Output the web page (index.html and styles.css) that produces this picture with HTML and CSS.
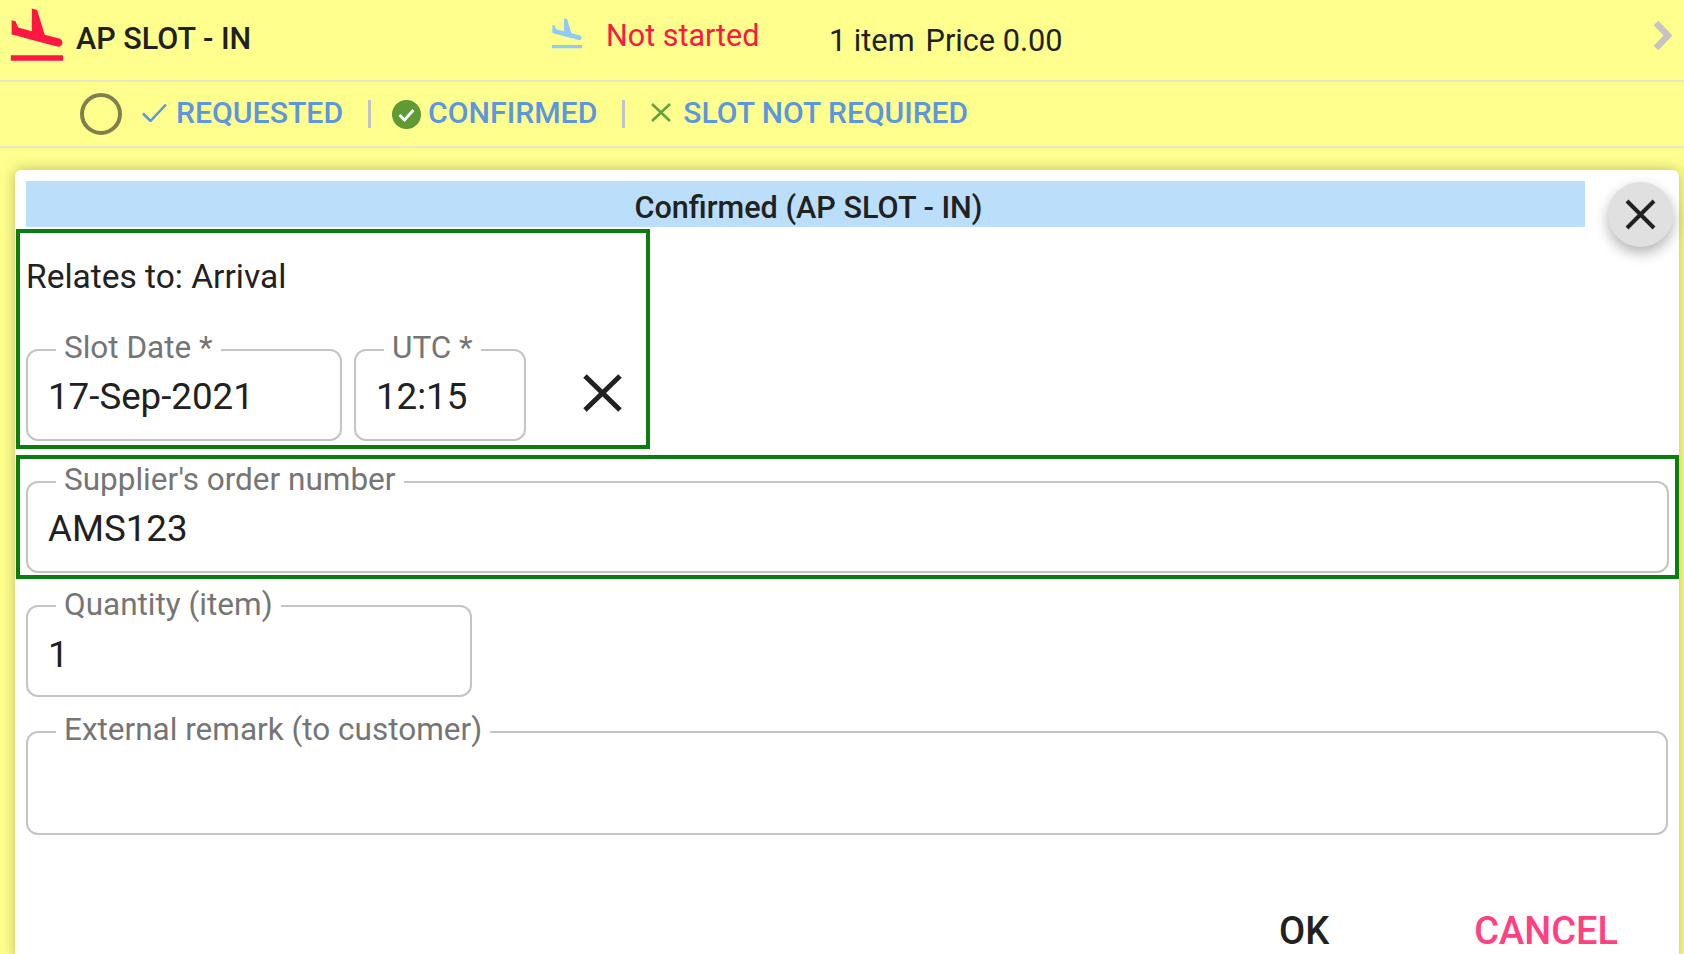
FILE: index.html
```html
<!DOCTYPE html>
<html lang="en">
<head>
<meta charset="utf-8">
<title>AP SLOT - IN</title>
<link rel="stylesheet" href="styles.css">
</head>
<body>
<header class="row-main">
  <svg class="plane-main" viewBox="0 0 24 24"><path d="M2.5 19h19v2h-19v-2zm7.18-5.73l4.35 1.16 5.31 1.42c.8.21 1.62-.26 1.84-1.06.21-.8-.26-1.62-1.06-1.84l-5.31-1.42-2.76-9.02L10.12 2v8.28L5.15 8.95l-.93-2.32-1.45-.39v5.17l1.6.43 5.31 1.43z"/></svg>
  <span class="service-name">AP SLOT - IN</span>
  <svg class="plane-status" viewBox="0 0 24 24"><path d="M2.5 19h19v2h-19v-2zm7.18-5.73l4.35 1.16 5.31 1.42c.8.21 1.62-.26 1.84-1.06.21-.8-.26-1.62-1.06-1.84l-5.31-1.42-2.76-9.02L10.12 2v8.28L5.15 8.95l-.93-2.32-1.45-.39v5.17l1.6.43 5.31 1.43z"/></svg>
  <span class="status">Not started</span>
  <span class="summary">1 item</span>
  <span class="summary summary-price">Price 0.00</span>
  <svg class="chevron" viewBox="0 0 21 33"><path d="M4 4 16 16.500 4 29"/></svg>
</header>
<nav class="row-actions">
  <span class="radio"></span>
  <svg class="check" viewBox="0 0 25 19"><path d="M1 10.500 8.500 18 24 1.500"/></svg>
  <span class="action action-requested">REQUESTED</span>
  <span class="sep sep-first"></span>
  <svg class="check-circle" viewBox="0 0 29 29"><circle cx="14.500" cy="14.500" r="14.500"/><path d="M7.500 15 12.500 20 21.500 10"/></svg>
  <span class="action action-confirmed">CONFIRMED</span>
  <span class="sep sep-second"></span>
  <svg class="cross-green" viewBox="0 0 20 19"><path d="M1 1 19 18M19 1 1 18"/></svg>
  <span class="action action-slot">SLOT NOT REQUIRED</span>
</nav>
<main class="dialog">
  <button class="close-btn" type="button" aria-label="Close"><svg viewBox="0 0 31 31"><path d="M2 2 29 29M29 2 2 29"/></svg></button>
  <h1 class="dialog-title">Confirmed (AP SLOT - IN)</h1>
  <section class="green-box box-slot">
    <p class="relates">Relates to: Arrival</p>
    <div class="slot-fields">
      <fieldset class="field field-date"><legend>Slot Date *</legend><div class="value">17-Sep-2021</div></fieldset>
      <fieldset class="field field-utc"><legend>UTC *</legend><div class="value">12:15</div></fieldset>
      <svg class="clear" viewBox="0 0 39 38"><path d="M2 2 37 36M37 2 2 36"/></svg>
    </div>
  </section>
  <section class="green-box box-order">
    <fieldset class="field field-order"><legend>Supplier's order number</legend><div class="value">AMS123</div></fieldset>
  </section>
  <fieldset class="field field-qty"><legend>Quantity (item)</legend><div class="value">1</div></fieldset>
  <fieldset class="field field-remark"><legend>External remark (to customer)</legend></fieldset>
  <div class="buttons">
    <button class="btn btn-ok" type="button">OK</button>
    <button class="btn btn-cancel" type="button">CANCEL</button>
  </div>
</main>
</body>
</html>
```

FILE: styles.css
```css
* { box-sizing: border-box; }
html, body { margin: 0; height: 954px; overflow: hidden; }
body { background: #ffff8d; font-family: Roboto, "Liberation Sans", sans-serif; color: #212121; }

.row-main { display: flex; align-items: flex-start; height: 82px; border-bottom: 2px solid #e8e8c4; position: relative; }
.plane-main { width: 66px; height: 66px; margin: 3px 0 0 4px; fill: #ff1744; flex: none; }
.service-name { font-size: 30.5px; font-weight: 500; line-height: 36px; margin: 21px 0 0 6px; width: 472px; flex: none; }
.plane-status { width: 38px; height: 38px; margin: 15px 0 0 0; fill: #90caf9; flex: none; }
.status { font-size: 30.5px; line-height: 36px; color: #ff1744; margin: 18px 0 0 20px; width: 223px; flex: none; }
.summary { font-size: 30.7px; line-height: 36px; margin-top: 23px; flex: none; }
.summary-price { margin-left: 11px; }
.chevron { position: absolute; left: 1652px; top: 19px; width: 21px; height: 33px; fill: none; stroke: #c4c4c4; stroke-width: 6.5; }

.row-actions { display: flex; align-items: center; height: 66px; border-bottom: 2px solid #e8e8c4; padding-left: 80px; }
.radio { width: 42px; height: 42px; border: 4px solid #7f7f50; border-radius: 50%; flex: none; }
.check { width: 25px; height: 19px; margin: 0 0 3px 20px; fill: none; stroke: #5c96dc; stroke-width: 2.5; flex: none; }
.action { font-size: 30.2px; font-weight: 500; color: #5c96dc; line-height: 36px; margin-bottom: 2px; flex: none; }
.action-requested { margin-left: 9px; }
.sep { width: 3px; height: 28px; background: #c0c4c8; flex: none; }
.sep-first { margin-left: 25px; }
.check-circle { width: 29px; height: 29px; margin-left: 21px; flex: none; }
.check-circle circle { fill: #5f9a35; }
.check-circle path { fill: none; stroke: #fff; stroke-width: 2.8; }
.action-confirmed { margin-left: 7px; }
.sep-second { margin-left: 25px; }
.cross-green { width: 20px; height: 19px; margin: 0 0 3px 26px; fill: none; stroke: #64a03c; stroke-width: 2.5; flex: none; }
.action-slot { margin-left: 12px; font-size: 30px; }

.dialog { position: relative; margin: 22px 5px 0 15px; height: 790px; padding-top: 11px; background: #fff; border-radius: 6px; box-shadow: 0 0 14px rgba(120,120,60,.5); }
.close-btn { position: absolute; left: 1593px; top: 12px; width: 65px; height: 65px; padding: 17px; border: 0; border-radius: 50%; background: #e0e0e0; box-shadow: 0 6px 14px rgba(0,0,0,.3); }
.close-btn svg { display: block; width: 31px; height: 31px; fill: none; stroke: #212121; stroke-width: 4; }
.dialog-title { margin: 0 94px 0 11px; height: 46px; padding: 7px 0 0 6px; background: #bbdefb; font-size: 30.6px; font-weight: 500; line-height: 40px; text-align: center; }

.green-box { margin: 2px 0 0 1px; border: 4px solid #0a7d0f; }
.box-slot { width: 634px; height: 220px; padding: 0 6px; }
.relates { margin: 0; padding-top: 26px; font-size: 33.5px; line-height: 36px; }
.slot-fields { display: flex; align-items: flex-end; margin-top: 39px; }
.box-order { margin-top: 6px; height: 124px; padding: 0 6px; width: 1663px; }

.field { margin: 0; padding: 0; border: 2px solid #c4c4c4; border-radius: 12px; min-width: 0; }
.field legend { margin-left: 28px; padding: 0 8px 4px; font-size: 31.5px; line-height: 28px; color: #757575; }
.value { font-size: 36.7px; line-height: 42px; padding: 10px 0 0 20px; }
.field-date { width: 316px; height: 107px; flex: none; }
.field-utc { width: 172px; height: 107px; margin-left: 12px; flex: none; }
.clear { width: 39px; height: 38px; margin: 0 0 29px 57px; fill: none; stroke: #212121; stroke-width: 5; flex: none; }
.field-order { height: 107px; margin-top: 7px; }
.field-qty { width: 446px; height: 106px; margin: 12px 0 0 11px; }
.field-qty legend { padding-bottom: 2px; }
.field-qty .value { padding-top: 13px; }
.field-remark { width: 1642px; height: 119px; margin: 19px 0 0 11px; }
.buttons { display: flex; justify-content: flex-end; margin-top: 75px; }
.btn { padding: 0; border: 0; background: none; font-family: inherit; font-size: 38px; font-weight: 500; line-height: 42px; }
.btn-ok { color: #212121; }
.btn-cancel { color: #ff4081; margin: 0 61px 0 145px; }
```
